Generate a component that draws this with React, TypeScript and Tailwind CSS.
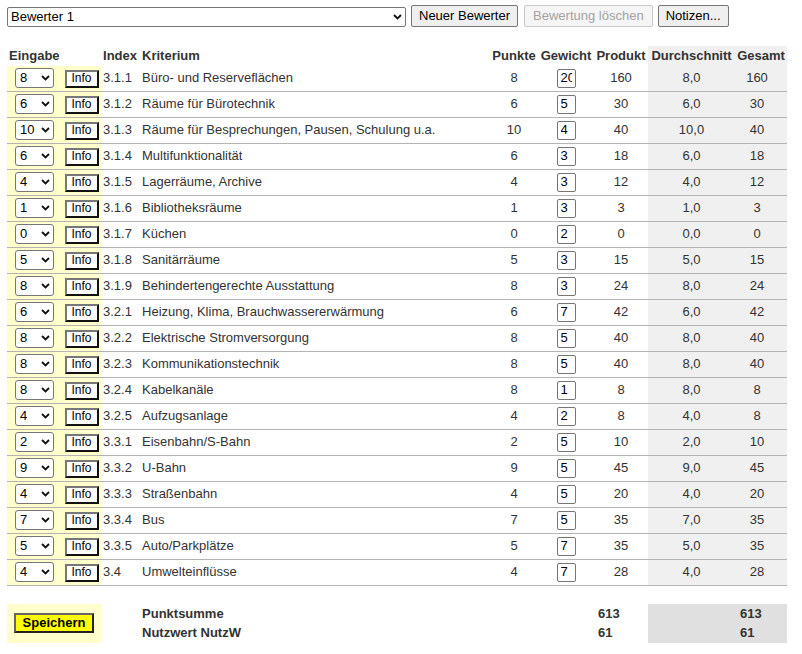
import { ChangeEvent, useState } from 'react';

type Row = {
  index: string;
  title: string;
  points: number;
  weight: number;
};

const rows: Row[] = [
  { index: '3.1.1', title: 'Büro- und Reserveflächen', points: 8, weight: 20 },
  { index: '3.1.2', title: 'Räume für Bürotechnik', points: 6, weight: 5 },
  { index: '3.1.3', title: 'Räume für Besprechungen, Pausen, Schulung u.a.', points: 10, weight: 4 },
  { index: '3.1.4', title: 'Multifunktionalität', points: 6, weight: 3 },
  { index: '3.1.5', title: 'Lagerräume, Archive', points: 4, weight: 3 },
  { index: '3.1.6', title: 'Bibliotheksräume', points: 1, weight: 3 },
  { index: '3.1.7', title: 'Küchen', points: 0, weight: 2 },
  { index: '3.1.8', title: 'Sanitärräume', points: 5, weight: 3 },
  { index: '3.1.9', title: 'Behindertengerechte Ausstattung', points: 8, weight: 3 },
  { index: '3.2.1', title: 'Heizung, Klima, Brauchwassererwärmung', points: 6, weight: 7 },
  { index: '3.2.2', title: 'Elektrische Stromversorgung', points: 8, weight: 5 },
  { index: '3.2.3', title: 'Kommunikationstechnik', points: 8, weight: 5 },
  { index: '3.2.4', title: 'Kabelkanäle', points: 8, weight: 1 },
  { index: '3.2.5', title: 'Aufzugsanlage', points: 4, weight: 2 },
  { index: '3.3.1', title: 'Eisenbahn/S-Bahn', points: 2, weight: 5 },
  { index: '3.3.2', title: 'U-Bahn', points: 9, weight: 5 },
  { index: '3.3.3', title: 'Straßenbahn', points: 4, weight: 5 },
  { index: '3.3.4', title: 'Bus', points: 7, weight: 5 },
  { index: '3.3.5', title: 'Auto/Parkplätze', points: 5, weight: 7 },
  { index: '3.4', title: 'Umwelteinflüsse', points: 4, weight: 7 },
];

const Chevron = () => (
  <svg
    width="9"
    height="6"
    viewBox="0 0 9 6"
    className="pointer-events-none absolute right-[4px] top-1/2 -translate-y-1/2"
  >
    <path d="M1 1l3.5 3.5L8 1" stroke="#111" strokeWidth="1.8" fill="none" />
  </svg>
);

const PointSelect = ({ value, onChange }: { value: number; onChange: (v: number) => void }) => (
  <div className="relative mx-auto w-[39px]">
    <select
      value={value}
      onChange={(e: ChangeEvent<HTMLSelectElement>) => onChange(Number(e.target.value))}
      className="block h-[20px] w-[39px] appearance-none rounded-[3px] border border-[#767676] bg-white pl-[4px] text-[13px] leading-[18px] text-black outline-none"
    >
      {Array.from({ length: 11 }, (_, i) => (
        <option key={i} value={i}>
          {i}
        </option>
      ))}
    </select>
    <Chevron />
  </div>
);

const App = () => {
  const [points, setPoints] = useState<number[]>(rows.map((r) => r.points));
  const [weights, setWeights] = useState<string[]>(rows.map((r) => String(r.weight)));

  const products = rows.map((_, i) => points[i] * (Number(weights[i]) || 0));
  const sum = products.reduce((a, b) => a + b, 0);

  return (
    <div className="min-h-screen bg-white px-[7px] pt-[5px] font-['Liberation_Sans',Arial,sans-serif] text-[13px] text-[#333]">
      <div className="flex items-center">
        <div className="relative mt-[1px] w-[399px]">
          <select className="block h-[20px] w-[399px] appearance-none rounded-[2px] border border-[#767676] bg-white pl-[3px] text-[13px] leading-[18px] text-black outline-none">
            <option>Bewerter 1</option>
          </select>
          <Chevron />
        </div>
        <button className="ml-[5px] h-[22px] rounded-[2px] border border-[#767676] bg-[#efefef] px-[7px] text-[13px] text-black">
          Neuer Bewerter
        </button>
        <button
          disabled
          className="ml-[6px] h-[22px] rounded-[2px] border border-[#c9c9c9] bg-[#f5f5f5] px-[8px] text-[13px] text-[#a3a3a3]"
        >
          Bewertung löschen
        </button>
        <button className="ml-[5px] h-[22px] rounded-[2px] border border-[#767676] bg-[#efefef] px-[7px] text-[13px] text-black">
          Notizen...
        </button>
      </div>

      <table className="mt-[19px] w-[780px] table-fixed border-separate border-spacing-0">
        <colgroup>
          <col className="w-[55px]" />
          <col className="w-[39px]" />
          <col className="w-[39px]" />
          <col className="w-[350px]" />
          <col className="w-[48px]" />
          <col className="w-[56px]" />
          <col className="w-[54px]" />
          <col className="w-[87px]" />
          <col className="w-[52px]" />
        </colgroup>
        <thead>
          <tr className="h-[18px] font-bold">
            <th colSpan={2} className="px-[2px] text-left">Eingabe</th>
            <th className="px-[2px] text-left">Index</th>
            <th className="px-[2px] text-left">Kriterium</th>
            <th className="text-center">Punkte</th>
            <th className="text-center">Gewicht</th>
            <th className="text-center">Produkt</th>
            <th className="bg-[#f0f0f0] text-center">Durchschnitt</th>
            <th className="bg-[#f0f0f0] text-center">Gesamt</th>
          </tr>
        </thead>
        <tbody>
          {rows.map((row, i) => (
            <tr key={row.index} className="h-[26px]">
              <td className="border-b border-[#b4b4b4] bg-[#ffffcc]">
                <PointSelect
                  value={points[i]}
                  onChange={(v) => setPoints(points.map((p, j) => (j === i ? v : p)))}
                />
              </td>
              <td className="border-b border-[#b4b4b4] bg-[#ffffcc] text-center">
                <button className="h-[18px] w-[34px] border-2 border-t-[#777] border-l-[#777] border-r-[#111] border-b-[#111] bg-white text-[12px] leading-[13px] text-black">
                  Info
                </button>
              </td>
              <td className="border-b border-[#b4b4b4] px-[2px]">{row.index}</td>
              <td className="border-b border-[#b4b4b4] px-[2px]">{row.title}</td>
              <td className="border-b border-[#b4b4b4] text-center">{points[i]}</td>
              <td className="border-b border-[#b4b4b4] text-center">
                <input
                  value={weights[i]}
                  onChange={(e) => setWeights(weights.map((w, j) => (j === i ? e.target.value : w)))}
                  className="mx-auto block h-[19px] w-[19px] rounded-[2px] border border-[#767676] bg-white px-[3px] text-[13px] text-black outline-none"
                />
              </td>
              <td className="border-b border-[#b4b4b4] text-center">{products[i]}</td>
              <td className="border-b border-[#b4b4b4] bg-[#f0f0f0] text-center">{points[i]},0</td>
              <td className="border-b border-[#b4b4b4] bg-[#f0f0f0] pr-[8px] text-center">{products[i]}</td>
            </tr>
          ))}
          <tr className="h-[18px]">
            <td colSpan={9} />
          </tr>
          <tr className="h-[18px] font-bold">
            <td colSpan={2} rowSpan={2} className="bg-[#ffffcc] text-center">
              <button className="h-[20px] w-[80px] border-2 border-t-[#666] border-l-[#666] border-r-[#222] border-b-[#222] bg-[#ffff00] text-[13px] font-bold leading-[14px] text-black">
                Speichern
              </button>
            </td>
            <td />
            <td className="px-[2px]">Punktsumme</td>
            <td />
            <td />
            <td className="pl-[4px]">{sum}</td>
            <td className="bg-[#e0e0e0]" />
            <td className="bg-[#e0e0e0] pl-[5px]">{sum}</td>
          </tr>
          <tr className="h-[19px] font-bold">
            <td />
            <td className="px-[2px]">Nutzwert NutzW</td>
            <td />
            <td />
            <td className="pl-[4px]">{Math.round(sum / 10)}</td>
            <td className="bg-[#e0e0e0]" />
            <td className="bg-[#e0e0e0] pl-[5px]">{Math.round(sum / 10)}</td>
          </tr>
        </tbody>
      </table>
    </div>
  );
};

export default App;
